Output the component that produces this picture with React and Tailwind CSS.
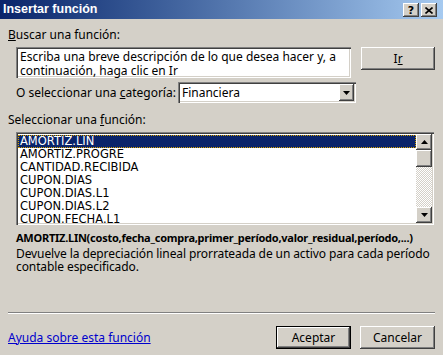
import React from 'react';

const raised =
  'bg-[#d4d0c8] shadow-[inset_-1px_-1px_0_#404040,inset_1px_1px_0_#ffffff,inset_-2px_-2px_0_#808080,inset_2px_2px_0_#d4d0c8]';
const sunken =
  'shadow-[inset_1px_1px_0_#808080,inset_2px_2px_0_#404040,inset_-1px_-1px_0_#ffffff,inset_-2px_-2px_0_#d4d0c8]';

function Arrow({ up }) {
  return (
    <svg width="7" height="4" viewBox="0 0 7 4">
      <path d={up ? 'M3.5 0 L7 4 L0 4 Z' : 'M0 0 L7 0 L3.5 4 Z'} fill="#000" />
    </svg>
  );
}

const functions = [
  'AMORTIZ.LIN',
  'AMORTIZ.PROGRE',
  'CANTIDAD.RECIBIDA',
  'CUPON.DIAS',
  'CUPON.DIAS.L1',
  'CUPON.DIAS.L2',
  'CUPON.FECHA.L1',
];

export default function App() {
  return (
    <div className="w-[443px] h-[355px] bg-[#d4d0c8] overflow-hidden text-[12px] text-black font-['Noto_Sans',sans-serif] leading-none whitespace-nowrap">
      {/* title bar */}
      <div className="h-[19px] flex items-center justify-between pl-[3px] pr-[6px] bg-linear-to-r from-[#0a246a] to-[#a6caf0]">
        <span className="text-white font-bold text-[12.5px] font-['Liberation_Sans',sans-serif]">Insertar función</span>
        <div className="flex gap-[2px] mt-[1px]">
          <div className={`w-[16px] h-[14px] flex items-center justify-center font-bold text-[11px] font-['DejaVu_Sans',sans-serif] ${raised}`}>?</div>
          <div className={`w-[16px] h-[14px] flex items-center justify-center ${raised}`}>
            <svg width="8" height="7" viewBox="0 0 8 7">
              <path d="M0.5 0.5 L7.5 6.5 M7.5 0.5 L0.5 6.5" stroke="#000" strokeWidth="1.6" />
            </svg>
          </div>
        </div>
      </div>

      <div className="px-[8px]">
        <div className="mt-[9px] h-[13px] leading-[13px]">
          <span className="underline">B</span>uscar una función:
        </div>

        <div className="mt-[6px] flex items-start pl-[8px]">
          <div className={`w-[336px] h-[31px] bg-white pl-[4px] pt-[3px] leading-[14px] ${sunken}`}>
            Escriba una breve descripción de lo que desea hacer y, a
            <br />
            continuación, haga clic en Ir
          </div>
          <div className={`ml-[10px] w-[74px] h-[23px] flex items-center justify-center ${raised}`}>
            I<span className="underline">r</span>
          </div>
        </div>

        <div className="mt-[4px] h-[21px] flex items-center pl-[8px]">
          <span>
            O seleccionar una <span className="underline">c</span>ategoría:
          </span>
          <div className={`ml-[2px] w-[178px] h-[21px] bg-white flex items-center justify-between pl-[4px] pr-[2px] ${sunken}`}>
            <span>Financiera</span>
            <div className={`w-[15px] h-[17px] flex items-center justify-center ${raised}`}>
              <Arrow />
            </div>
          </div>
        </div>

        <div className="mt-[10px] h-[13px] leading-[13px]">
          Seleccionar una <span className="underline">f</span>unción:
        </div>

        <div className={`mt-[6px] ml-[8px] w-[418px] h-[93px] bg-white flex p-[2px] ${sunken}`}>
          <div className="flex-1 pt-[1px] font-['DejaVu_Sans',sans-serif] text-[11.5px]">
            {functions.map((f, i) => (
              <div
                key={f}
                className={`h-[13px] flex items-center pl-[2px] ${
                  i === 0 ? 'bg-[#0a246a] text-white outline-1 outline-dotted outline-[#d4a000] -outline-offset-1' : ''
                }`}
              >
                {f}
              </div>
            ))}
          </div>
          <div className="w-[16px] flex flex-col">
            <div className={`h-[16px] flex items-center justify-center ${raised}`}>
              <Arrow up />
            </div>
            <div className={`h-[17px] ${raised}`} />
            <div className="flex-1 bg-[repeating-conic-gradient(#ffffff_0_25%,#d4d0c8_0_50%)] bg-size-[2px_2px]" />
            <div className={`h-[16px] flex items-center justify-center ${raised}`}>
              <Arrow />
            </div>
          </div>
        </div>

        <div className="mt-[6px] pl-[8px] font-bold text-[11px] tracking-[-0.25px] h-[13px] leading-[13px]">
          AMORTIZ.LIN(costo,fecha_compra,primer_período,valor_residual,período,...)
        </div>
        <div className="mt-[3px] pl-[8px] leading-[13px] tracking-[-0.1px]">
          Devuelve la depreciación lineal prorrateada de un activo para cada período
          <br />
          contable especificado.
        </div>

        <div className="mt-[39px] h-[2px] border-t border-[#808080] border-b border-b-white" />

        <div className="mt-[12px] h-[23px] flex items-center">
          <span className="text-[#0000cc] underline">Ayuda sobre esta función</span>
          <div className="ml-auto flex gap-[9px]">
            <div className="w-[75px] h-[23px] border border-black">
              <div className={`w-full h-full flex items-center justify-center ${raised}`}>Aceptar</div>
            </div>
            <div className={`w-[75px] h-[23px] flex items-center justify-center ${raised}`}>Cancelar</div>
          </div>
        </div>
      </div>
    </div>
  );
}
